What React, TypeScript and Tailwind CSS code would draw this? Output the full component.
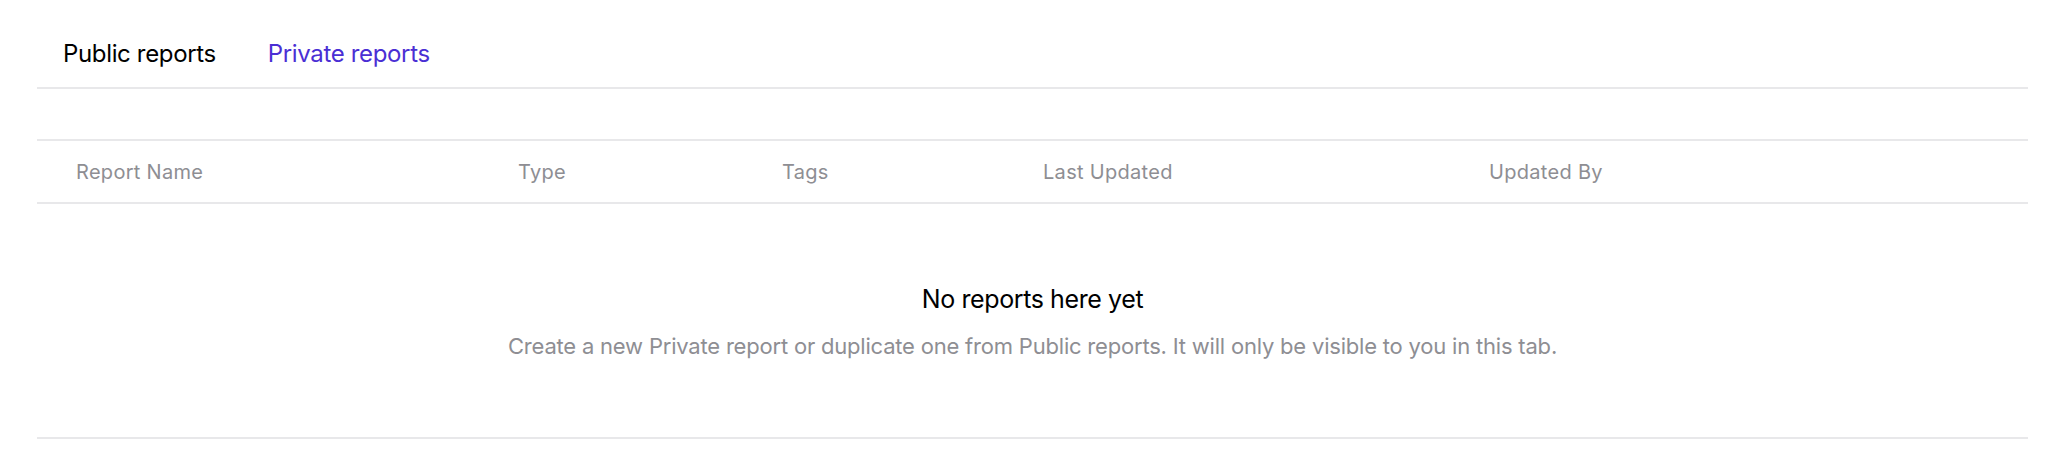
import React, { useState } from "react"

const columns = [
  { label: "Report Name", width: "w-[442px]" },
  { label: "Type", width: "w-[264px]" },
  { label: "Tags", width: "w-[261px]" },
  { label: "Last Updated", width: "w-[446px]" },
  { label: "Updated By", width: "flex-1" },
]

export default function App() {
  const [tab, setTab] = useState<"public" | "private">("private")

  return (
    <div className="min-h-[461px] w-full bg-white pl-[37px] pr-[20px] font-['Inter',sans-serif]">
      <div className="flex h-[89px] items-end gap-[52px] border-b-2 border-[#e8e8ea] px-[26px] pb-[17px]">
        <button
          onClick={() => setTab("public")}
          className={`text-[24px] leading-[32px] tracking-[-0.35px] ${tab === "public" ? "text-[#4a2fd4]" : "text-black"}`}
        >
          Public reports
        </button>
        <button
          onClick={() => setTab("private")}
          className={`text-[24px] leading-[32px] tracking-[-0.35px] ${tab === "private" ? "text-[#4a2fd4]" : "text-black"}`}
        >
          Private reports
        </button>
      </div>

      <div className="mt-[50px] flex h-[65px] items-center border-y-2 border-[#e8e8ea] pl-[39px]">
        {columns.map((col) => (
          <div key={col.label} className={`${col.width} text-[20px] tracking-[0.3px] text-[#8e8e93]`}>
            {col.label}
          </div>
        ))}
      </div>

      <div className="flex h-[235px] flex-col items-center border-b-2 border-[#e8e8ea] pt-[78px]">
        <p className="text-[25px] leading-[34px] tracking-[-0.4px] text-black">No reports here yet</p>
        <p className="mt-[15px] text-[22px] leading-[30px] tracking-[-0.2px] text-[#8e8e93]">
          Create a new Private report or duplicate one from Public reports. It will only be visible to you in this tab.
        </p>
      </div>
    </div>
  )
}
